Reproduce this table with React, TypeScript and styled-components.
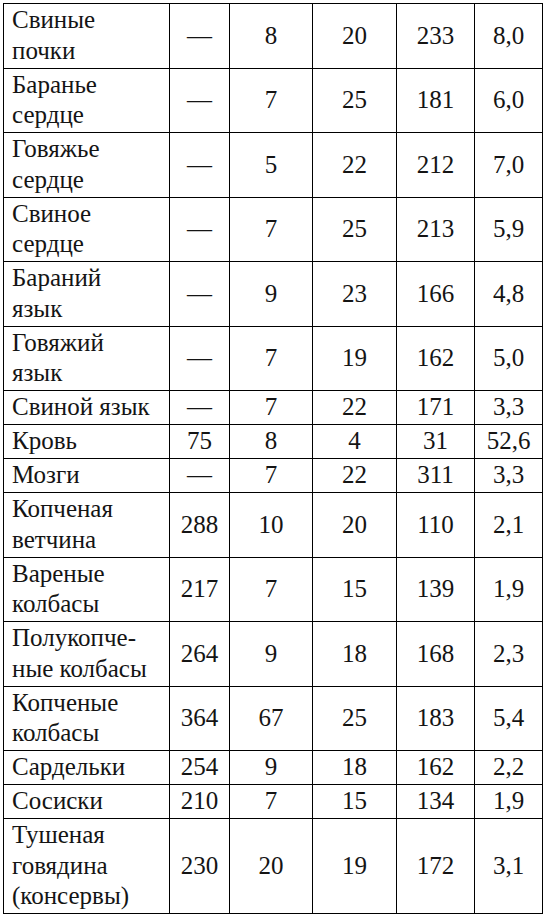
import React from "react";
import styled, { createGlobalStyle } from "styled-components";

type Row = {
  name: string[];
  values: string[];
};

const rows: Row[] = [
  { name: ["Свиные", "почки"], values: ["—", "8", "20", "233", "8,0"] },
  { name: ["Баранье", "сердце"], values: ["—", "7", "25", "181", "6,0"] },
  { name: ["Говяжье", "сердце"], values: ["—", "5", "22", "212", "7,0"] },
  { name: ["Свиное", "сердце"], values: ["—", "7", "25", "213", "5,9"] },
  { name: ["Бараний", "язык"], values: ["—", "9", "23", "166", "4,8"] },
  { name: ["Говяжий", "язык"], values: ["—", "7", "19", "162", "5,0"] },
  { name: ["Свиной язык"], values: ["—", "7", "22", "171", "3,3"] },
  { name: ["Кровь"], values: ["75", "8", "4", "31", "52,6"] },
  { name: ["Мозги"], values: ["—", "7", "22", "311", "3,3"] },
  { name: ["Копченая", "ветчина"], values: ["288", "10", "20", "110", "2,1"] },
  { name: ["Вареные", "колбасы"], values: ["217", "7", "15", "139", "1,9"] },
  { name: ["Полукопче-", "ные колбасы"], values: ["264", "9", "18", "168", "2,3"] },
  { name: ["Копченые", "колбасы"], values: ["364", "67", "25", "183", "5,4"] },
  { name: ["Сардельки"], values: ["254", "9", "18", "162", "2,2"] },
  { name: ["Сосиски"], values: ["210", "7", "15", "134", "1,9"] },
  {
    name: ["Тушеная", "говядина", "(консервы)"],
    values: ["230", "20", "19", "172", "3,1"],
  },
];

const columnWidths = [166, 60, 83, 84, 78, 68];

const App = () => {
  return (
    <>
      <GlobalStyle />
      <Page>
        <Table>
          <colgroup>
            {columnWidths.map((w, i) => (
              <col key={i} style={{ width: w }} />
            ))}
          </colgroup>
          <tbody>
            {rows.map((row, i) => (
              <tr key={i}>
                <NameCell>
                  {row.name.map((line, j) => (
                    <React.Fragment key={j}>
                      {j > 0 && <br />}
                      {line}
                    </React.Fragment>
                  ))}
                </NameCell>
                {row.values.map((v, j) => (
                  <ValueCell key={j}>{v}</ValueCell>
                ))}
              </tr>
            ))}
          </tbody>
        </Table>
      </Page>
    </>
  );
};

export default App;

const GlobalStyle = createGlobalStyle`
  html, body {
    margin: 0;
    padding: 0;
    background: #ffffff;
  }
`;

const Page = styled.div`
  padding: 3px 0 0 3px;
`;

const Table = styled.table`
  border-collapse: collapse;
  table-layout: fixed;
  width: 539px;
  font-family: "Liberation Serif", "DejaVu Serif", serif;
  font-size: 25px;
  line-height: 30.5px;
  color: #141414;
`;

const Cell = styled.td`
  border: 1px solid #000000;
  padding: 1.25px 0;
  vertical-align: middle;
`;

const NameCell = styled(Cell)`
  padding-left: 8px;
  text-align: left;
  white-space: nowrap;
`;

const ValueCell = styled(Cell)`
  text-align: center;
`;
